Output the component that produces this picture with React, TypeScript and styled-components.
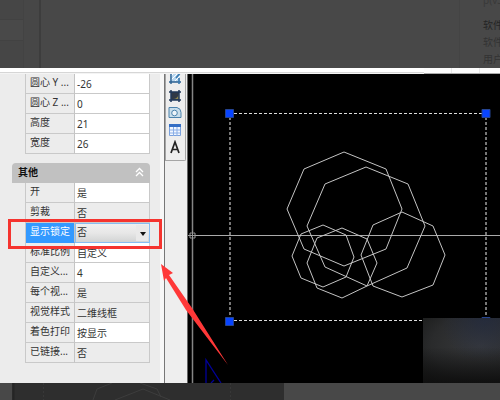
import React from "react";
import styled, { createGlobalStyle } from "styled-components";

const GlobalStyle = createGlobalStyle`
  * { box-sizing: border-box; }
  body {
    margin: 0;
    background: #484848;
    font-family: "Noto Sans", "Noto Sans CJK SC", sans-serif;
    font-size: 10px;
    line-height: 12px;
    color: #333;
  }
  button, select { font: inherit; color: inherit; }
`;

const Page = styled.div`
  display: flex;
  flex-direction: column;
  min-height: 100vh;
  overflow: hidden;
`;

const Backdrop = styled.header`
  display: flex;
  height: 68px;
  overflow: hidden;
  background: #484848;
`;

const BackdropList = styled.div`
  width: 24px;
  padding-top: 19px;
  border-right: 1px solid #434343;
  background: #464646;
`;

const BackdropItem = styled.div`
  height: 22px;
  border-top: 1px solid #424242;
  border-bottom: 1px solid #424242;
  background: #494949;
`;

const BackdropRule = styled.div`
  width: 17px;
  border-right: 2px solid #3d3d3d;
  background: #474747;
`;

const BackdropSide = styled.aside`
  display: flex;
  flex-direction: column;
  width: 41px;
  height: 85px;
  margin-top: -8px;
  margin-left: auto;
  padding-left: 23px;
  border-left: 1px solid #444;
  overflow: hidden;
  white-space: nowrap;
  font-size: 10px;
  line-height: 17px;
`;

const SideLine = styled.span<{ $strong?: boolean }>`
  color: ${(p) => (p.$strong ? "#252525" : "#333")};
  &:first-child { margin-bottom: 9px; line-height: 16px; color: #393939; }
`;

const TopStrip = styled.div`
  display: flex;
  height: 6px;
  background: linear-gradient(#fff 4px, #d6d6d6 4px, #d6d6d6 5px, #f4f4f4 5px);
`;

const StripTabs = styled.div`
  width: 76px;
  margin-left: auto;
  border-bottom: 1px solid #aaa;
  background: repeating-linear-gradient(90deg, #fcfcfc 0 27px, #e8e8e8 27px 28px);
`;

const Stage = styled.main`
  position: relative;
  display: grid;
  grid-template-columns: 164px 24px minmax(0, 1fr);
`;

const Properties = styled.section`
  display: flex;
  flex-direction: column;
  padding: 0 14px 20px 12px;
  background: linear-gradient(90deg, #ececec 160px, #f7f7f7 160px);
`;

const Grid = styled.table`
  width: 125px;
  margin-left: 13px;
  border-spacing: 0;
  border-left: 1px solid #c9c9c9;
  table-layout: fixed;
`;

const NameCell = styled.th<{ $selected?: boolean }>`
  width: 49px;
  height: 20px;
  padding: 0 0 3px 4px;
  border-right: 1px solid #c4c4c4;
  border-bottom: 1px solid ${(p) => (p.$selected ? "#3399ff" : "#c9c9c9")};
  background: ${(p) => (p.$selected ? "#3399ff" : "#ececec")};
  color: ${(p) => (p.$selected ? "#fff" : "#333")};
  font-weight: 400;
  text-align: left;
  white-space: nowrap;
`;

const ValueCell = styled.td<{ $muted?: boolean }>`
  height: 20px;
  padding: 0 0 0 2px;
  border-right: 1px solid #c9c9c9;
  border-bottom: 1px solid #c9c9c9;
  background: ${(p) => (p.$muted ? "#ececec" : "#fff")};
  white-space: nowrap;
`;

const SelectCell = styled.td`
  height: 20px;
  padding: 0;
`;

const SelectBox = styled.div`
  display: grid;
  grid-template-columns: 1fr 13px;
  height: 20px;
  border: 1px solid #86bdf2;
  background: linear-gradient(#f0f0f0, #e7e7e7 50%, #d2d4d4);
`;

const Select = styled.select`
  grid-column: 1 / 3;
  grid-row: 1;
  width: 100%;
  height: 18px;
  padding: 0 0 2px 1px;
  border: 0;
  outline: 0;
  appearance: none;
  background: transparent;
`;

const SelectArrow = styled.svg`
  grid-column: 2;
  grid-row: 1;
  width: 13px;
  height: 18px;
  pointer-events: none;
`;

const GroupHeader = styled.button`
  display: flex;
  align-items: center;
  justify-content: space-between;
  height: 20px;
  margin-top: 9px;
  padding: 0 6px 2px;
  border: 0;
  border-radius: 4px 4px 0 0;
  background: #c1c1c1;
  color: #111;
  font-weight: 700;
`;

const Toolbar = styled.nav`
  display: flex;
  border-left: 1px solid #777;
  border-right: 1px solid #666;
  background: #eee;
`;

const ToolList = styled.div`
  display: flex;
  flex-direction: column;
  align-items: center;
  align-self: flex-start;
  width: 21px;
  height: 87px;
  padding-right: 1px;
  border: 1px solid #a5a5a5;
  border-top: 0;
  border-radius: 0 0 2px 0;
`;

const Tool = styled.button`
  display: flex;
  width: 18px;
  height: 17px;
  padding: 0;
  border: 0;
  align-items: center;
  justify-content: center;
  background: transparent;
  flex: none;
  overflow: hidden;
  &:first-child { height: 13px; align-items: flex-end; padding-bottom: 2px; }
`;

const Canvas = styled.section`
  background: #000;
`;

const Drawing = styled.svg`
  display: block;
  width: 100%;
  height: 309px;
`;

const Highlight = styled.div`
  position: absolute;
  left: 8px;
  top: 145px;
  width: 154px;
  height: 30px;
  border: 3px solid #f5342f;
  pointer-events: none;
`;

const ArrowMark = styled.svg`
  position: absolute;
  left: 160px;
  top: 190px;
  width: 70px;
  height: 103px;
  pointer-events: none;
`;

const Haze = styled.div`
  position: absolute;
  right: 0;
  bottom: 0;
  width: 77px;
  height: 65px;
  background:
    linear-gradient(transparent 45%, #101010),
    radial-gradient(ellipse at 80% 0%, #202a4499, transparent 50%),
    radial-gradient(ellipse at 75% 42%, #38393b, #2a2b2c 60%, #171818);
`;

const Below = styled.footer`
  display: flex;
  flex: 1;
  min-height: 17px;
  padding-left: 12px;
  background: #484848;
`;

const BelowArt = styled.svg`
  width: 272px;
  height: 17px;
  background: #2e2e2e;
`;

type Property = { name: string; value: string; muted?: boolean; selected?: boolean };

const geometry: Property[] = [
  { name: "圆心 Y ...", value: "-26" },
  { name: "圆心 Z ...", value: "0" },
  { name: "高度", value: "21" },
  { name: "宽度", value: "26" },
];

const misc: Property[] = [
  { name: "开", value: "是" },
  { name: "剪裁", value: "否", muted: true },
  { name: "显示锁定", value: "否", selected: true },
  { name: "标准比例", value: "自定义" },
  { name: "自定义...", value: "4" },
  { name: "每个视...", value: "是", muted: true },
  { name: "视觉样式", value: "二维线框", muted: true },
  { name: "着色打印", value: "按显示" },
  { name: "已链接...", value: "否", muted: true },
];

const octagons = [
  "156,78 198,95 214,135 198,175 156,192 116,175 99,135 116,95",
  "178,93 220,110 237,152 219,194 179,212 137,193 119,152 137,110",
  "135,151 158,161 166,183 158,203 135,213 113,204 104,182 113,160",
  "154,154 179,165 189,189 179,212 154,224 129,214 119,189 129,164",
  "214,138 245,152 257,181 245,211 214,223 185,212 173,181 185,151",
];

function PropertyTable({ rows, label }: { rows: Property[]; label: string }) {
  return (
    <Grid aria-label={label}>
      <tbody>
        {rows.map((row) => (
          <tr key={row.name}>
            <NameCell scope="row" $selected={row.selected}>
              {row.selected ? <label htmlFor="display-lock">{row.name}</label> : row.name}
            </NameCell>
            {row.selected ? (
              <SelectCell>
                <SelectBox>
                  <Select id="display-lock" defaultValue={row.value}>
                    <option>否</option>
                    <option>是</option>
                  </Select>
                  <SelectArrow viewBox="0 0 13 18">
                    <path d="M0 1h12v16H0z" fill="#e9e9e9" />
                    <path d="M4 8h6l-3 4z" fill="#111" />
                  </SelectArrow>
                </SelectBox>
              </SelectCell>
            ) : (
              <ValueCell $muted={row.muted}>{row.value}</ValueCell>
            )}
          </tr>
        ))}
      </tbody>
    </Grid>
  );
}

export default function App() {
  return (
    <Page>
      <GlobalStyle />
      <Backdrop>
        <BackdropList>
          <BackdropItem />
        </BackdropList>
        <BackdropRule />
        <BackdropSide>
          <SideLine>p(v3</SideLine>
          <SideLine $strong>软件</SideLine>
          <SideLine>软件</SideLine>
          <SideLine>用户</SideLine>
        </BackdropSide>
      </Backdrop>
      <TopStrip>
        <StripTabs />
      </TopStrip>
      <Stage>
        <Properties>
          <PropertyTable rows={geometry} label="视图" />
          <GroupHeader type="button">
            其他
            <svg width="9" height="10" viewBox="0 0 9 10" fill="none" stroke="#fff" strokeWidth="1.3">
              <path d="M1 5l3.500-3.500L8 5M1 9l3.500-3.500L8 9" />
            </svg>
          </GroupHeader>
          <PropertyTable rows={misc} label="其他" />
        </Properties>
        <Toolbar aria-label="绘图">
          <ToolList>
            <Tool type="button" aria-label="图案填充">
              <svg width="14" height="13" viewBox="0 0 14 13" fill="none">
                <path d="M2 0h10v10H2z" fill="#b9d7ef" />
                <path d="M3 8l8-8M3 4l4-4M7 9l5-5" stroke="#fff" />
                <path d="M3 0v12M1 10h12" stroke="#2d6292" strokeWidth="1.4" />
                <path d="M11 6v6M13 0L8 6" stroke="#3a7ab0" strokeWidth="1.6" />
              </svg>
            </Tool>
            <Tool type="button" aria-label="渐变色">
              <svg width="14" height="14" viewBox="0 0 14 14" fill="none">
                <path d="M3 3h8v8H3z" fill="#303946" />
                <path d="M5 10q5 0 6-6v6z" fill="#8d8751" />
                <path d="M3 1v12M11 1v12M1 3h12M1 11h12" stroke="#203859" strokeWidth="1.5" />
              </svg>
            </Tool>
            <Tool type="button" aria-label="面域">
              <svg width="14" height="13" viewBox="0 0 14 13">
                <path d="M1 1.500h8q4 1 4 5v5H1z" fill="#c9deeb" stroke="#4c83ad" />
                <circle cx="6.500" cy="7" r="2.800" fill="#eef5fa" stroke="#4c83ad" />
              </svg>
            </Tool>
            <Tool type="button" aria-label="表格">
              <svg width="12" height="12" viewBox="0 0 12 12">
                <path d="M.5.5h11v11H.5z" fill="#f2f7ff" stroke="#7aa1dc" />
                <path d="M0 0h12v3H0z" fill="#356fc5" />
                <path d="M1 6h10M1 9h10M4.500 3v9M8 3v9" stroke="#8aaee6" />
              </svg>
            </Tool>
            <Tool type="button" aria-label="多行文字">
              <svg width="12" height="14" viewBox="0 0 12 14" fill="none" stroke="#222" strokeWidth="1.700">
                <path d="M2 13L6 2l4 11M3.500 9.500h5" />
              </svg>
            </Tool>
          </ToolList>
        </Toolbar>
        <Canvas aria-label="绘图区">
          <Drawing fill="none">
            <path d="M4.500 0v158M4.500 165v144" stroke="#858585" strokeWidth="1.500" />
            <path d="M7 161.500h2000" stroke="#aaa" />
            <path d="M2 159h5v5H2zM0 161.500h7M4.500 157v9" stroke="#999" />
            <path d="M46 39.500h248M46 246.500h248" stroke="#ddd" strokeDasharray="3 2" />
            <path d="M42 43v200M298 43v200" stroke="#777" strokeWidth="2" strokeDasharray="3 2" />
            <g stroke="#c4c4c4">
              {octagons.map((points) => (
                <polygon key={points} points={points} />
              ))}
            </g>
            <g fill="#0844ff" stroke="#254491">
              <path d="M37.500 35.500h8v8h-8zM294 35.500h8v8h-8zM37.500 243.500h8v8h-8zM294 243.500h8v8h-8z" />
            </g>
            <path d="M18 309V286l15 23M23 309l3-3" stroke="#000099" strokeWidth="1.300" />
          </Drawing>
        </Canvas>
        <Haze />
        <Highlight />
        <ArrowMark viewBox="0 0 70 103">
          <path d="M1 0L13 9l-4 2L32 44 68 101 26 46 6 14l-2 3z" fill="#ff3838" />
        </ArrowMark>
      </Stage>
      <Below>
        <BelowArt fill="none">
          <path d="M1.500 0v17" stroke="#252525" strokeWidth="2" />
          <path d="M81 17l4-11 15-6M103 17l28-11 27 11M128 0l17 6 4 8" stroke="#3d3d3d" />
          <path d="M31.500 0v17M218.500 0v17" stroke="#383838" strokeDasharray="2 2" />
        </BelowArt>
      </Below>
    </Page>
  );
}
